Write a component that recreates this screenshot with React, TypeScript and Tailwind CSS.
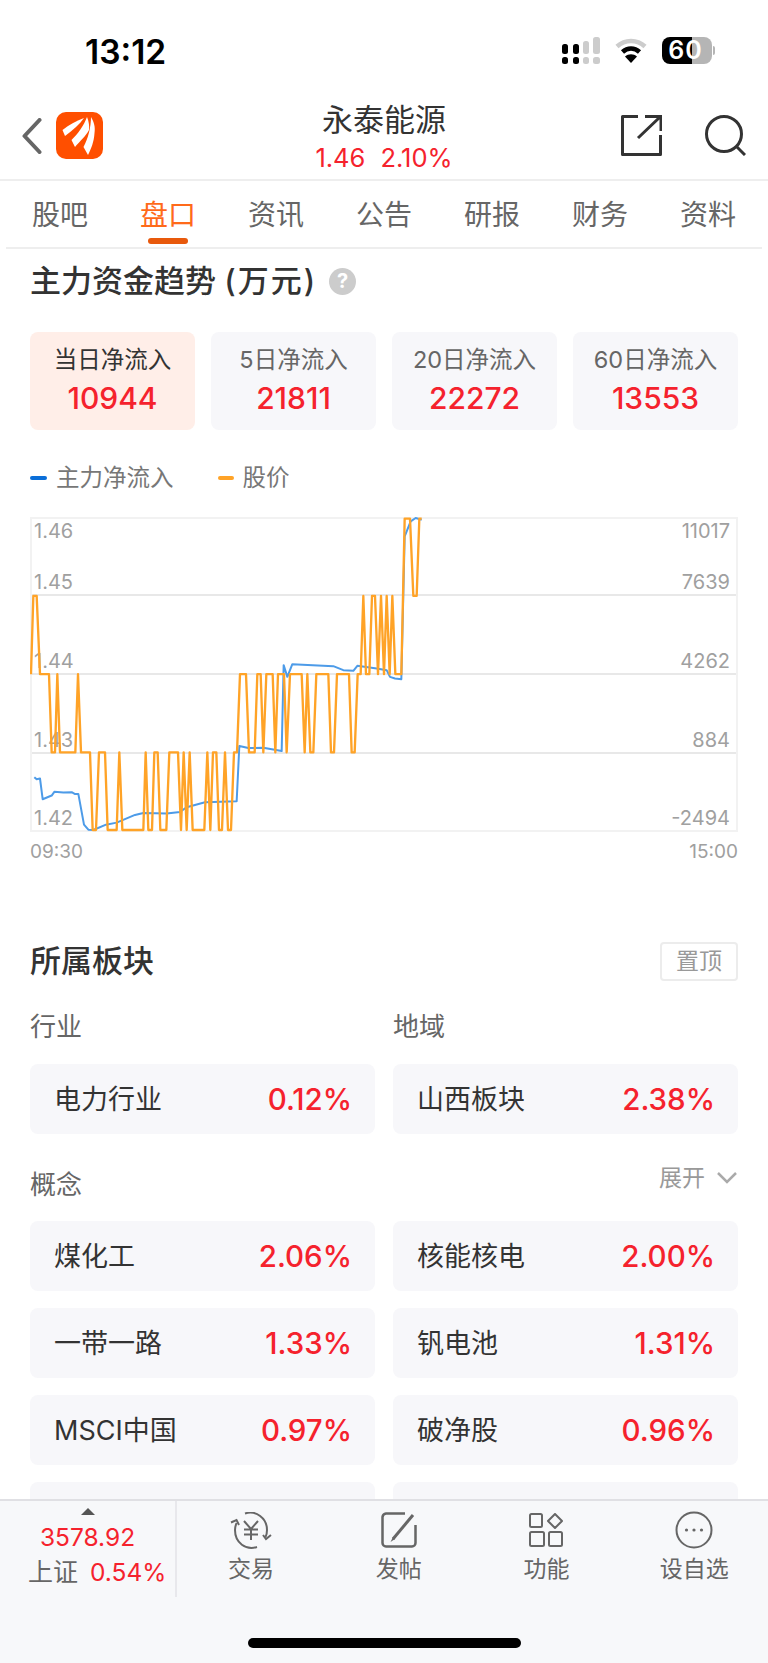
import React from "react";

// chart traces, coordinates taken in a 3x space of the chart box
const L: Record<string, number> = { a: 57, b: 288, c: 522, d: 756, e: 988 };

const priceLine: [number, string][] = [
  [93, "c"], [100, "b"], [110, "b"], [120, "c"], [147, "c"], [155, "d"], [165, "d"], [172, "c"], [180, "d"], [226, "d"],
  [234, "c"], [243, "d"], [270, "d"], [278, "e"], [288, "e"], [297, "d"], [315, "d"], [323, "e"], [350, "e"], [358, "d"],
  [367, "e"], [430, "e"], [437, "d"], [445, "e"], [456, "e"], [463, "d"], [473, "d"], [481, "e"], [499, "e"], [508, "d"],
  [534, "d"], [543, "e"], [551, "d"], [560, "e"], [569, "d"], [578, "e"], [613, "e"], [622, "d"], [631, "e"], [639, "d"],
  [649, "d"], [657, "e"], [666, "e"], [675, "d"], [684, "e"], [693, "e"], [702, "d"], [711, "d"], [720, "c"], [738, "c"],
  [747, "d"], [764, "d"], [772, "c"], [782, "c"], [790, "d"], [799, "c"], [818, "c"], [826, "d"], [834, "c"], [852, "c"],
  [860, "d"], [870, "c"], [905, "c"], [914, "d"], [922, "c"], [931, "d"], [940, "d"], [949, "c"], [985, "c"], [993, "d"],
  [1002, "d"], [1011, "c"], [1047, "c"], [1055, "d"], [1064, "d"], [1073, "c"], [1082, "c"], [1090, "b"], [1098, "c"], [1108, "c"],
  [1116, "b"], [1125, "b"], [1134, "c"], [1143, "b"], [1152, "c"], [1160, "b"], [1169, "c"], [1177, "b"], [1186, "c"], [1204, "c"],
  [1214, "a"], [1230, "a"], [1240, "b"], [1250, "b"], [1258, "a"], [1265, "a"],
];

const flowLine: [number, number][] = [
  [103, 830], [110, 836], [120, 834], [128, 896], [155, 885], [163, 874], [190, 876], [215, 875], [224, 880], [235, 880],
  [252, 972], [265, 987], [280, 988], [318, 972], [350, 966], [405, 943], [430, 937], [500, 939], [540, 934], [560, 920],
  [615, 905], [710, 902], [718, 737], [745, 743], [790, 742], [845, 752], [851, 495], [862, 530], [877, 492], [1000, 498],
  [1030, 510], [1060, 512], [1072, 497], [1130, 505], [1160, 510], [1170, 530], [1185, 535], [1204, 537], [1214, 110], [1232, 65],
  [1247, 55], [1265, 60],
];

const topCards = [
  { label: "当日净流入", value: "10944", active: true },
  { label: "5日净流入", value: "21811" },
  { label: "20日净流入", value: "22272" },
  { label: "60日净流入", value: "13553" },
];

const tabs = ["股吧", "盘口", "资讯", "公告", "研报", "财务", "资料"];

const concepts = [
  { name: "煤化工", pct: "2.06%" },
  { name: "核能核电", pct: "2.00%" },
  { name: "一带一路", pct: "1.33%" },
  { name: "钒电池", pct: "1.31%" },
  { name: "MSCI中国", pct: "0.97%" },
  { name: "破净股", pct: "0.96%" },
  { name: "", pct: "" },
  { name: "", pct: "" },
];

function PlateCard({ name, pct }: { name: string; pct: string }) {
  return (
    <div className="flex h-[70px] items-center justify-between rounded-[8px] bg-[#f7f7fa] pl-[24px] pr-[23px]">
      <span className="mt-[2px] text-[27px] text-[#333]">{name}</span>
      <span className="text-[29.5px] font-medium text-[#f5222d]">{pct}</span>
    </div>
  );
}

function ChartRow({ left, right, top }: { left: string; right: string; top?: [string, string] }) {
  return (
    <div className="flex flex-col justify-between border-b-2 border-[#e8e8e8] pl-[2px] pr-[6px] last:border-b-0">
      {top ? (
        <div className="flex justify-between text-[20px] leading-[24px] text-[#a0a0a0]">
          <span>{top[0]}</span>
          <span>{top[1]}</span>
        </div>
      ) : (
        <div />
      )}
      <div className="flex justify-between text-[20px] leading-[24px] text-[#a0a0a0]">
        <span>{left}</span>
        <span>{right}</span>
      </div>
    </div>
  );
}

function BottomItem({ label, icon }: { label: string; icon: React.ReactNode }) {
  return (
    <div className="flex w-[147.75px] flex-col items-center pt-[10px]">
      <div className="flex h-[38px] items-center justify-center">{icon}</div>
      <span className="mt-[5px] text-[23px] leading-[30px] text-[#666]">{label}</span>
    </div>
  );
}

export default function App() {
  return (
    <div className="flex h-[1663px] w-[768px] flex-col overflow-hidden bg-white font-['Inter','Noto_Sans_CJK_SC',sans-serif]">
      {/* status bar */}
      <div className="flex h-[95px] shrink-0 items-start justify-between pl-[85px] pr-[53px] pt-[32px]">
        <span className="text-[33.5px] font-semibold leading-[40px] text-black">13:12</span>
        <div className="mt-[5px] flex items-center">
          <svg width="38" height="27" viewBox="0 0 38 27" className="mr-[15px]">
            <rect x="0" y="7" width="6" height="10" rx="2.5" fill="#000" />
            <rect x="11" y="7" width="6" height="10" rx="2.5" fill="#000" />
            <rect x="21" y="4" width="6" height="13" rx="2.5" fill="#ccc" />
            <rect x="31" y="0" width="7" height="17" rx="2.5" fill="#ccc" />
            <rect x="0" y="20" width="6" height="7" rx="2.5" fill="#000" />
            <rect x="11" y="20" width="6" height="7" rx="2.5" fill="#000" />
            <rect x="21" y="20" width="6" height="7" rx="2.5" fill="#ccc" />
            <rect x="31" y="20" width="7" height="7" rx="2.5" fill="#ccc" />
          </svg>
          <svg width="32" height="25" viewBox="0 0 32 25" className="mr-[15px]">
            <path d="M2 8.5C10 1 22 1 30 8.5" fill="none" stroke="#ccc" strokeWidth="4.5" />
            <path d="M7.5 14C12.5 9.3 19.5 9.3 24.5 14" fill="none" stroke="#000" strokeWidth="4.5" />
            <path d="M16 25L10 18.5C13.5 15.6 18.5 15.6 22 18.5Z" fill="#000" />
          </svg>
          <div className="flex h-[27px] w-[50px] items-center justify-center rounded-[8px] bg-[linear-gradient(90deg,#000_60%,#b5b5b5_60%)] pr-[3px] text-[25px] font-semibold leading-none tracking-[1px] text-white">
            60
          </div>
          <div className="ml-[1px] h-[9px] w-[2px] rounded-r-[2px] bg-[#b5b5b5]" />
        </div>
      </div>

      {/* header */}
      <div className="grid h-[86px] shrink-0 grid-cols-[1fr_auto_1fr] items-start border-b-2 border-[#eeeeee] px-[22px]">
        <div className="flex items-center pt-[17px]">
          <svg width="20" height="36" viewBox="0 0 20 36">
            <path d="M17.5 2L2.5 18L17.5 34" fill="none" stroke="#666" strokeWidth="4" strokeLinecap="round" strokeLinejoin="round" />
          </svg>
          <svg width="47" height="47" viewBox="0 0 47 47" className="ml-[14px]">
            <rect width="47" height="47" rx="10" fill="#ff4f00" />
            <path d="M6.5 18C13 13 21 8.5 28 6C24 12 17 18 9 24Z" fill="#fff" />
            <path d="M15.5 28C22 22 28 13 31 5C33 10 33.5 14 33 18C30 24 24 29 19 35Z" fill="#fff" />
            <path d="M27.5 35C32 27 35 15 35 5C38 10 39.5 15 38.5 21C38 30 35 37 32 43Z" fill="#fff" />
          </svg>
        </div>
        <div className="flex flex-col items-center pt-[6px]">
          <span className="text-[31px] leading-[38px] text-[#333]">永泰能源</span>
          <div className="mt-[4px] flex gap-[15px] text-[25.5px] leading-[30px] text-[#f5222d]">
            <span>1.46</span>
            <span>2.10%</span>
          </div>
        </div>
        <div className="flex items-center justify-end gap-[43px] pt-[20px]">
          <svg width="41" height="41" viewBox="0 0 41 41">
            <path d="M17 1.5H1.5V39.5H39.5V20" fill="none" stroke="#333" strokeWidth="3" strokeLinejoin="round" />
            <path d="M17 23L39 2M24 1.5H40V16" fill="none" stroke="#333" strokeWidth="3" />
          </svg>
          <svg width="41" height="41" viewBox="0 0 41 41">
            <circle cx="19" cy="19" r="17.5" fill="none" stroke="#333" strokeWidth="3" />
            <path d="M31 31L40 40" stroke="#333" strokeWidth="3" />
          </svg>
        </div>
      </div>

      {/* tabs */}
      <div className="mx-[6px] flex h-[68px] shrink-0 border-b-2 border-[#eeeeee]">
        {tabs.map((t) => (
          <div key={t} className="flex w-[108px] flex-col items-center">
            <span className={`mt-[14px] text-[28px] leading-[40px] ${t === "盘口" ? "text-[#ff6a1a]" : "text-[#666]"}`}>{t}</span>
            {t === "盘口" && <div className="mt-[3px] h-[6px] w-[40px] rounded-[3px] bg-[#e8590c]" />}
          </div>
        ))}
      </div>

      {/* scrolling page */}
      <div className="flex-1 overflow-hidden px-[30px]">
        <div className="mt-[10px] flex h-[44px] items-center">
          <span className="text-[31px] font-medium leading-[44px] text-[#333]">
            主力资金趋势 <span className="tracking-[2px]">(万元)</span>
          </span>
          <div className="ml-[12px] flex h-[27px] w-[27px] items-center justify-center rounded-full bg-[#cccccc] text-[20px] font-bold text-white">?</div>
        </div>

        <div className="mt-[29px] grid grid-cols-4 gap-[16px]">
          {topCards.map((c) => (
            <div
              key={c.label}
              className={`flex h-[98px] flex-col items-center rounded-[8px] pt-[13px] ${c.active ? "bg-[#ffeee8]" : "bg-[#f7f7fa]"}`}
            >
              <span className={`text-[23.5px] leading-[30px] ${c.active ? "text-[#333]" : "text-[#666]"}`}>{c.label}</span>
              <span className="mt-[3px] text-[30px] font-medium leading-[40px] text-[#f5222d]">{c.value}</span>
            </div>
          ))}
        </div>

        <div className="mt-[33px] flex h-[30px] items-center text-[23.5px] text-[#777]">
          <div className="h-[4px] w-[17px] rounded-full bg-[#0a6ed8]" />
          <span className="ml-[9px]">主力净流入</span>
          <div className="ml-[44px] h-[4px] w-[16px] rounded-full bg-[#ffa327]" />
          <span className="ml-[9px]">股价</span>
        </div>

        <div className="relative mt-[24px] grid h-[315px] grid-rows-[77px_79px_79px_76px] border-2 border-[#f2f2f2]">
          <svg viewBox="90 52 2124 942" preserveAspectRatio="none" className="absolute left-[-2px] top-[-2px] h-[315px] w-[708px]">
            <polyline
              points={flowLine.map(([x, y]) => `${x},${y}`).join(" ")}
              fill="none"
              stroke="#4d9be8"
              strokeWidth="6"
              strokeLinejoin="round"
            />
            <polyline
              points={priceLine.map(([x, l]) => `${x},${L[l]}`).join(" ")}
              fill="none"
              stroke="#ffa327"
              strokeWidth="7"
              strokeLinejoin="round"
            />
          </svg>
          <ChartRow top={["1.46", "11017"]} left="1.45" right="7639" />
          <ChartRow left="1.44" right="4262" />
          <ChartRow left="1.43" right="884" />
          <ChartRow left="1.42" right="-2494" />
        </div>

        <div className="mt-[8px] flex h-[24px] items-center justify-between text-[19px] text-[#a0a0a0]">
          <span>09:30</span>
          <span>15:00</span>
        </div>

        <div className="mt-[78px] flex h-[39px] items-center justify-between">
          <span className="text-[31px] font-medium text-[#333]">所属板块</span>
          <div className="flex h-[39px] w-[78px] items-center justify-center rounded-[4px] border-2 border-[#ececec] text-[23px] text-[#999]">置顶</div>
        </div>

        <div className="mt-[28px] grid grid-cols-2 gap-x-[18px]">
          <span className="text-[26px] leading-[36px] text-[#666]">行业</span>
          <span className="text-[26px] leading-[36px] text-[#666]">地域</span>
        </div>
        <div className="mt-[19px] grid grid-cols-2 gap-x-[18px]">
          <PlateCard name="电力行业" pct="0.12%" />
          <PlateCard name="山西板块" pct="2.38%" />
        </div>

        <div className="mt-[33px] flex h-[36px] items-start justify-between">
          <span className="text-[26px] leading-[36px] text-[#666]">概念</span>
          <div className="flex items-center">
            <span className="text-[23px] leading-[22px] text-[#999]">展开</span>
            <svg width="20" height="12" viewBox="0 0 20 12" className="ml-[12px] mr-[1px]">
              <path d="M1 1L10 10L19 1" fill="none" stroke="#aaa" strokeWidth="2.5" />
            </svg>
          </div>
        </div>

        <div className="mt-[18px] grid grid-cols-2 gap-x-[18px] gap-y-[17px]">
          {concepts.map((c, i) => (
            <PlateCard key={i} name={c.name} pct={c.pct} />
          ))}
        </div>
      </div>

      {/* bottom bar */}
      <div className="h-[164px] shrink-0 border-t-2 border-[#e0e0e4] bg-[#f7f8fa]">
        <div className="flex h-[96px]">
          <div className="flex w-[177px] shrink-0 flex-col items-center border-r-2 border-[#e8e8ec] pt-[7px]">
            <div className="h-0 w-0 border-x-[7px] border-b-[7px] border-x-transparent border-b-[#555]" />
            <span className="mt-[7px] text-[24.5px] leading-[30px] text-[#f5222d]">3578.92</span>
            <div className="mt-[4px] flex items-center gap-[12px] self-start pl-[28px]">
              <span className="text-[25px] leading-[32px] text-[#666]">上证</span>
              <span className="text-[24.5px] leading-[32px] text-[#f5222d]">0.54%</span>
            </div>
          </div>
          <BottomItem
            label="交易"
            icon={
              <svg width="42" height="37" viewBox="0 0 42 37" fill="none" stroke="#666" strokeWidth="2">
                <path d="M15 1.5C26 -2 37 6 37 18C37 21 36.5 23 35.5 25" />
                <path d="M27 35C16 38.5 5 31 5 18C5 16 5.5 13.5 6.5 11" />
                <path d="M1 10.5L6.5 8L9 13" />
                <path d="M41 23L36 27L33 23" />
                <path d="M14 9L21 17L28 9M21 17V28M14 17.5H28M14 22.5H28" />
              </svg>
            }
          />
          <BottomItem
            label="发帖"
            icon={
              <svg width="36" height="36" viewBox="0 0 36 36" fill="none" stroke="#666">
                <path d="M24 1.5H5A4 4 0 0 0 1.5 5V31A3.5 3.5 0 0 0 5 34.5H31A3.5 3.5 0 0 0 34.5 31V13" strokeWidth="2.5" />
                <path d="M12 27L32 3" strokeWidth="3" />
                <path d="M9.5 30L12 25L14 27Z" fill="#666" stroke="none" />
              </svg>
            }
          />
          <BottomItem
            label="功能"
            icon={
              <svg width="34" height="34" viewBox="0 0 34 34" fill="none" stroke="#666" strokeWidth="2">
                <rect x="1" y="1" width="12" height="13" rx="1.5" />
                <rect x="1" y="19" width="14" height="14" rx="1.5" />
                <rect x="20" y="19" width="13" height="14" rx="1.5" />
                <path d="M26 1L33 8L26 15L19 8Z" strokeLinejoin="round" />
              </svg>
            }
          />
          <BottomItem
            label="设自选"
            icon={
              <svg width="38" height="38" viewBox="0 0 38 38" fill="none">
                <circle cx="19" cy="19" r="17.5" stroke="#666" strokeWidth="2" />
                <circle cx="11.5" cy="19" r="1.6" fill="#666" />
                <circle cx="19" cy="19" r="1.6" fill="#666" />
                <circle cx="26.5" cy="19" r="1.6" fill="#666" />
              </svg>
            }
          />
        </div>
        <div className="mt-[41px] flex justify-center">
          <div className="h-[10px] w-[273px] rounded-full bg-black" />
        </div>
      </div>
    </div>
  );
}
